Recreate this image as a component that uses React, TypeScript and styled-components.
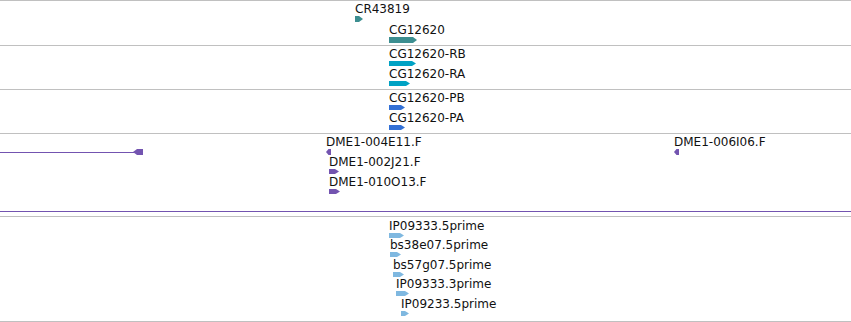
import styled, { createGlobalStyle } from "styled-components";

const GlobalStyle = createGlobalStyle`
  html, body {
    margin: 0;
    padding: 0;
    background: #ffffff;
  }
  body {
    font-family: "DejaVu Sans", "Liberation Sans", sans-serif;
  }
`

const Panel = styled.div`
  width: 851px;
  height: 322px;
  border-top: 1px solid #c0c0c0;
  box-sizing: border-box;
  display: flex;
  flex-direction: column;
  background: #ffffff;
  overflow: hidden;
`

const Track = styled.div<{ $h: number; $line?: string; $after?: number; $topLine?: boolean }>`
  position: relative;
  flex: none;
  height: ${p => p.$h}px;
  border-bottom: 1px solid ${p => p.$line || "#c0c0c0"};
  border-top: ${p => (p.$topLine ? "1px solid #c0c0c0" : "none")};
  margin-bottom: ${p => p.$after || 0}px;
`

const FeatureBox = styled.div`
  position: absolute;
  display: flex;
  flex-direction: column;
  align-items: flex-start;
`

// label sits in a white box, the top one bleeds 1px up over the track line
const Label = styled.span<{ $bleed?: boolean }>`
  font-family: "DejaVu Sans", "Liberation Sans", sans-serif;
  font-size: 12px;
  line-height: 13px;
  color: #111111;
  background: #ffffff;
  white-space: nowrap;
  padding: ${p => (p.$bleed ? "3px 1px 0" : "2px 0 0")};
  margin: ${p => (p.$bleed ? "-1px -1px 0" : "0")};
`

const GlyphSvg = styled.svg`
  display: block;
  position: relative;
  z-index: 1;
`

const Intron = styled.div<{ $color: string }>`
  position: absolute;
  left: 0;
  top: 18px;
  width: 134px;
  height: 1px;
  background: ${p => p.$color};
`

const ExonSpot = styled.div`
  position: absolute;
  left: 133px;
  top: 15px;
`

type Dir = "right" | "left"

function Glyph({ w, h, color, dir = "right" }: { w: number; h: number; color: string; dir?: Dir }) {
  const t = Math.min(4, w * 0.5)
  const pts =
    dir === "right"
      ? `0,0 ${w - t},0 ${w},${h / 2} ${w - t},${h} 0,${h}`
      : `${w},0 ${t},0 0,${h / 2} ${t},${h} ${w},${h}`
  return (
    <GlyphSvg width={w} height={h} viewBox={`0 0 ${w} ${h}`}>
      <polygon points={pts} fill={color} />
    </GlyphSvg>
  )
}

type Feat = { name: string; x: number; y: number; w: number; h?: number; dir?: Dir; bleed?: boolean }

function Feature({ f, color }: { f: Feat; color: string }) {
  return (
    <FeatureBox style={{ left: f.x, top: f.y }}>
      <Label $bleed={f.bleed}>{f.name}</Label>
      <Glyph w={f.w} h={f.h || 6} color={color} dir={f.dir} />
    </FeatureBox>
  )
}

const TEAL = "#3c8e90"
const CYAN = "#00a2c4"
const BLUE = "#3371d6"
const PURPLE = "#7354b0"
const SKY = "#7fb8e0"

const genes: Feat[] = [
  { name: "CR43819", x: 355, y: 0, w: 8, bleed: true },
  { name: "CG12620", x: 389, y: 21, w: 28 },
]

const transcripts: Feat[] = [
  { name: "CG12620-RB", x: 389, y: 0, w: 27, h: 5 },
  { name: "CG12620-RA", x: 389, y: 20, w: 21, h: 5 },
]

const proteins: Feat[] = [
  { name: "CG12620-PB", x: 389, y: 0, w: 16, h: 5 },
  { name: "CG12620-PA", x: 389, y: 20, w: 16, h: 5 },
]

const clones: Feat[] = [
  { name: "DME1-004E11.F", x: 326, y: 0, w: 5, dir: "left" },
  { name: "DME1-002J21.F", x: 329, y: 20, w: 10, h: 5 },
  { name: "DME1-010O13.F", x: 329, y: 40, w: 11, h: 5 },
  { name: "DME1-006I06.F", x: 674, y: 0, w: 5, dir: "left" },
]

const ests: Feat[] = [
  { name: "IP09333.5prime", x: 389, y: 1, w: 15, h: 5 },
  { name: "bs38e07.5prime", x: 390, y: 20, w: 11, h: 5 },
  { name: "bs57g07.5prime", x: 393, y: 40, w: 11, h: 5 },
  { name: "IP09333.3prime", x: 396, y: 59, w: 13, h: 5 },
  { name: "IP09233.5prime", x: 401, y: 79, w: 8, h: 5 },
]

export default function App() {
  return (
    <>
      <GlobalStyle />
      <Panel>
        <Track $h={44}>
          {genes.map(f => <Feature key={f.name} f={f} color={TEAL} />)}
        </Track>
        <Track $h={43}>
          {transcripts.map(f => <Feature key={f.name} f={f} color={CYAN} />)}
        </Track>
        <Track $h={43}>
          {proteins.map(f => <Feature key={f.name} f={f} color={BLUE} />)}
        </Track>
        <Track $h={77} $line={PURPLE} $after={4}>
          <Intron $color={PURPLE} />
          <ExonSpot>
            <Glyph w={10} h={6} color={PURPLE} dir="left" />
          </ExonSpot>
          {clones.map(f => <Feature key={f.name} f={f} color={PURPLE} />)}
        </Track>
        <Track $h={104} $topLine>
          {ests.map(f => <Feature key={f.name} f={f} color={SKY} />)}
        </Track>
      </Panel>
    </>
  )
}
